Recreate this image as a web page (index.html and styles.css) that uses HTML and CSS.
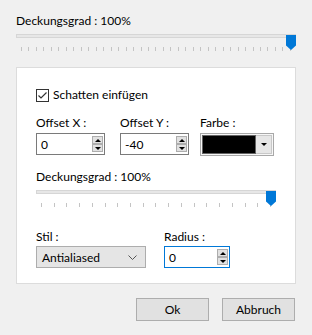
FILE: index.html
```html
<!DOCTYPE html>
<html lang="de">
<head>
<meta charset="utf-8">
<title>Schatten</title>
<link rel="stylesheet" href="styles.css">
</head>
<body>
<div class="dialog">
  <div class="label">Deckungsgrad : 100%</div>
  <div class="slider">
    <div class="track"></div>
    <div class="ticks" id="ticks1"></div>
    <svg class="thumb" width="10" height="15" viewBox="0 0 10 15"><path d="M0 0H10V10.5L5 15L0 10.5Z" fill="#0078d7"/></svg>
  </div>

  <div class="panel">
    <label class="check-row">
      <span class="checkbox"><svg width="11" height="11" viewBox="0 0 11 11"><path d="M1.5 5.5L4 8L9.5 2.5" fill="none" stroke="#333" stroke-width="1.2"/></svg></span>
      Schatten einfügen
    </label>

    <div class="fields">
      <div class="field fx">
        <div class="label">Offset X :</div>
        <div class="input">0
          <span class="spin"><span class="sb"><i class="up"></i></span><span class="sb"><i class="down"></i></span></span>
        </div>
      </div>
      <div class="field fy">
        <div class="label">Offset Y :</div>
        <div class="input">-40
          <span class="spin"><span class="sb"><i class="up"></i></span><span class="sb"><i class="down"></i></span></span>
        </div>
      </div>
      <div class="field fc">
        <div class="label">Farbe :</div>
        <div class="color"><span class="swatch"></span><span class="cbtn"><i class="down"></i></span></div>
      </div>
    </div>

    <div class="label opacity2">Deckungsgrad : 100%</div>
    <div class="slider small">
      <div class="track"></div>
      <div class="ticks" id="ticks2"></div>
      <svg class="thumb" width="10" height="15" viewBox="0 0 10 15"><path d="M0 0H10V10.5L5 15L0 10.5Z" fill="#0078d7"/></svg>
    </div>

    <div class="fields bottom">
      <div class="field fs">
        <div class="label">Stil :</div>
        <div class="select">Antialiased
          <svg class="chev" width="9" height="5" viewBox="0 0 9 5"><path d="M0.5 0.5L4.5 4.5L8.5 0.5" fill="none" stroke="#555" stroke-width="1"/></svg>
        </div>
      </div>
      <div class="field fr">
        <div class="label">Radius :</div>
        <div class="input focus">0
          <span class="spin"><span class="sb"><i class="up"></i></span><span class="sb"><i class="down"></i></span></span>
        </div>
      </div>
    </div>
  </div>

  <div class="actions">
    <button class="btn">Ok</button>
    <button class="btn">Abbruch</button>
  </div>
</div>
<script>
  function ticks(id, n) {
    var el = document.getElementById(id);
    for (var i = 0; i < n; i++) {
      var t = document.createElement("span");
      t.className = "tick";
      el.appendChild(t);
    }
  }
  ticks("ticks1", 37);
  ticks("ticks2", 19);
</script>
</body>
</html>
```

FILE: styles.css
```css
body { margin:0; background:#f0f0f0; font:12px Lato, "Liberation Sans", sans-serif; color:#000 }
.dialog { width:312px; height:335px; box-sizing:border-box; padding:13px 16px 0 }
.label { height:16px; line-height:16px; white-space:nowrap }

.slider { position:relative; height:24px; margin-top:3px }
.slider .track { margin-top:5px; height:4px; box-sizing:border-box; border:1px solid #d6d6d6; background:#e7e7e7 }
.slider .ticks { display:flex; justify-content:space-between; margin:9px 5px 0 }
.tick { width:1px; height:4px; background:#c4c4c4 }
.slider .thumb { position:absolute; top:1px; right:0 }
.slider.small { width:240px; margin-top:0 }

.panel { margin-top:9px; height:217px; box-sizing:border-box; border:1px solid #dcdcdc; background:#fff; padding:19px 0 0 19px }

.check-row { display:flex; align-items:center; gap:4px; height:16px; line-height:16px }
.checkbox { width:13px; height:13px; box-sizing:border-box; border:1px solid #333; display:flex; align-items:center; justify-content:center; background:#fff }

.fields { display:flex; margin-top:12px }
.field .input, .field .color, .field .select { margin-top:2px }
.fx { width:69px; margin-right:15px }
.fy { width:69px; margin-right:11px }
.fc { width:74px }

.input { height:22px; box-sizing:border-box; border:1px solid #7a7a7a; background:#fff; display:flex; align-items:center; padding-left:4px }
.input.focus { border-color:#0078d7 }
.spin { margin-left:auto; margin-right:1px; display:flex; flex-direction:column }
.sb { width:11px; height:8px; box-sizing:border-box; border:1px solid #adadad; background:#e1e1e1; display:flex; align-items:center; justify-content:center }
.up { width:0; height:0; border-left:3px solid transparent; border-right:3px solid transparent; border-bottom:3px solid #000 }
.down { width:0; height:0; border-left:3px solid transparent; border-right:3px solid transparent; border-top:3px solid #000 }

.color { height:23px; box-sizing:border-box; border:1px solid #a8a8a8; padding:1px; display:flex; background:#f7f7f7; margin-top:1px }
.swatch { flex:1; background:#000; border:1px solid #646464 }
.cbtn { width:15px; background:#e6e6e6; border:1px solid #c8c8c8; border-left:none; display:flex; align-items:center; justify-content:center }

.opacity2 { margin-top:13px }

.bottom { margin-top:15px }
.fs { width:110px; margin-right:18px }
.fr { width:66px }
.bottom .input, .bottom .select { margin-top:1px }
.select { height:22px; box-sizing:border-box; border:1px solid #adadad; background:#e5e5e5; display:flex; align-items:center; padding:0 8px 0 5px }
.select .chev { margin-left:auto }

.actions { display:flex; justify-content:flex-end; gap:13px; margin-top:14px; padding-right:1px }
.btn { width:73px; height:23px; border:1px solid #adadad; background:#e1e1e1; font:inherit; color:#000; padding:0 }
```
